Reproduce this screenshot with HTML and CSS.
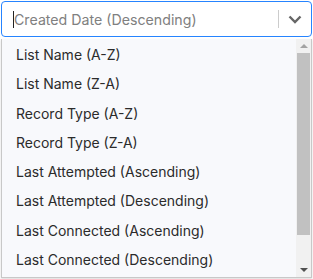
FILE: index.html
```html
<!DOCTYPE html>
<html lang="en">
<head>
    <meta charset="UTF-8">
    <title>Sort select</title>
    <link rel="stylesheet" href="styles.css">
</head>
<body>
    <div class="select">
        <div class="control">
            <div class="valor">
                <span class="cursor"></span>
                <span class="placeholder">Created Date (Descending)</span>
            </div>
            <span class="separador"></span>
            <div class="seta">
                <svg width="14" height="9" viewBox="0 0 14 9">
                    <path d="M1.5 1.5 L7 7 L12.5 1.5" fill="none" stroke="#666" stroke-width="2.4"/>
                </svg>
            </div>
        </div>
        <div class="menu">
            <ul class="opcoes">
                <li>List Name (A-Z)</li>
                <li>List Name (Z-A)</li>
                <li>Record Type (A-Z)</li>
                <li>Record Type (Z-A)</li>
                <li>Last Attempted (Ascending)</li>
                <li>Last Attempted (Descending)</li>
                <li>Last Connected (Ascending)</li>
                <li>Last Connected (Descending)</li>
            </ul>
            <div class="scrollbar">
                <span class="botaoCima"></span>
                <div class="trilho">
                    <div class="thumb"></div>
                </div>
                <span class="botaoBaixo"></span>
            </div>
        </div>
    </div>
</body>
</html>
```

FILE: styles.css
```css
html, body {
    margin: 0;
    padding: 0;
    background: #fff;
    font-family: Inter, "Noto Sans", sans-serif;
}
.select {
    width: 313px;
    height: 279px;
    padding: 1px;
    box-sizing: border-box;
}
.control {
    display: flex;
    align-items: center;
    height: 36px;
    border: 1px solid #2684ff;
    border-radius: 4px;
    box-sizing: border-box;
    background: #fff;
}
.valor {
    flex: 1;
    display: flex;
    align-items: center;
    padding-left: 11px;
}
.cursor {
    width: 1px;
    height: 17px;
    background: #222;
}
.placeholder {
    color: #808080;
    font-size: 14.2px;
}
.separador {
    width: 1px;
    height: 18px;
    background: #ccc;
}
.seta {
    width: 32px;
    display: flex;
    justify-content: center;
    align-items: center;
    padding-top: 1px;
}
.menu {
    display: flex;
    margin-top: 2px;
    height: 238px;
    border: 1px solid #c8c8c8;
    border-top: none;
    background: #f8f9fc;
    box-shadow: 0 1px 2px rgba(0, 0, 0, 0.15);
}
.opcoes {
    flex: 1;
    list-style: none;
    margin: 0;
    padding: 1px 0 0 0;
}
.opcoes li {
    height: 29.25px;
    line-height: 29.25px;
    padding-left: 14px;
    font-size: 14px;
    color: #2b2b2b;
}
.scrollbar {
    width: 15px;
    display: flex;
    flex-direction: column;
    background: #f1f1f1;
}
.botaoCima, .botaoBaixo {
    height: 14px;
    display: flex;
    justify-content: center;
    align-items: center;
}
.botaoCima::before {
    content: "";
    border-left: 4px solid transparent;
    border-right: 4px solid transparent;
    border-bottom: 4px solid #a3a3a3;
}
.botaoBaixo::before {
    content: "";
    border-left: 4px solid transparent;
    border-right: 4px solid transparent;
    border-top: 4px solid #505050;
}
.trilho {
    flex: 1;
    padding: 0 1px;
}
.thumb {
    height: 182px;
    background: #c1c1c1;
}
```
